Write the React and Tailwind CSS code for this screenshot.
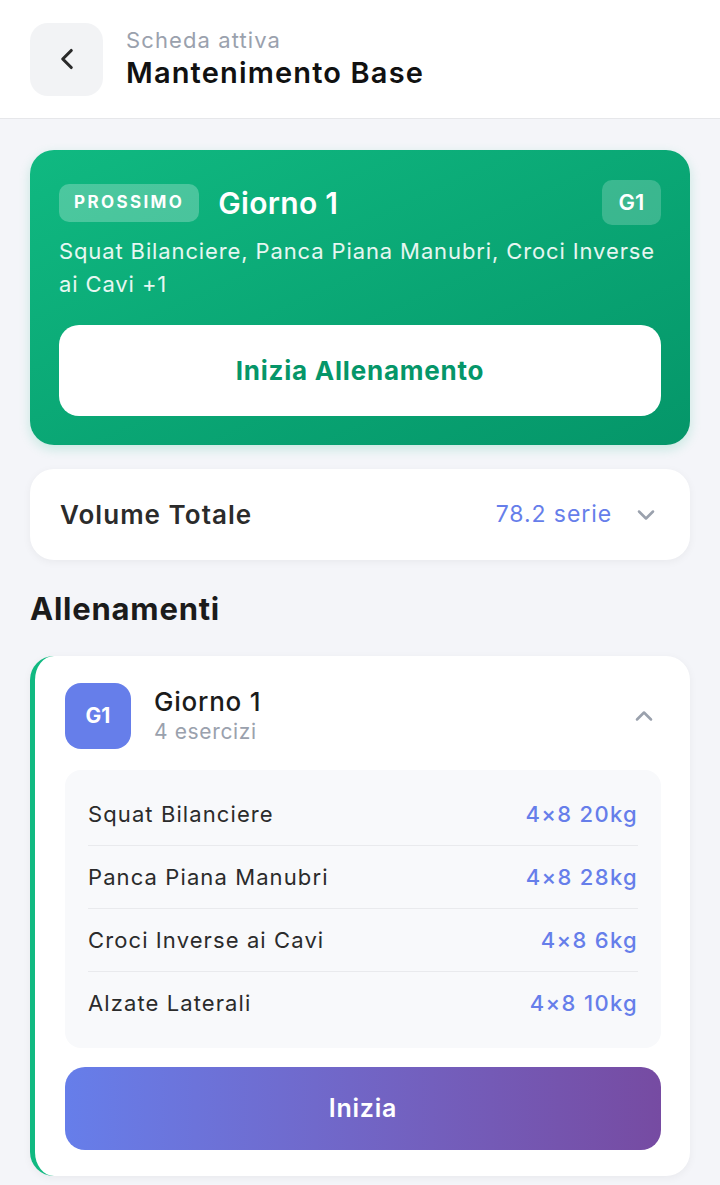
import React from 'react';

const exercises = [
  { name: 'Squat Bilanciere', detail: '4×8 20kg' },
  { name: 'Panca Piana Manubri', detail: '4×8 28kg' },
  { name: 'Croci Inverse ai Cavi', detail: '4×8 6kg' },
  { name: 'Alzate Laterali', detail: '4×8 10kg' },
];

function Chevron({ dir = 'down', className = '' }) {
  const d = dir === 'down' ? 'M6 9l6 6 6-6' : dir === 'up' ? 'M6 15l6-6 6 6' : 'M15 6l-6 6 6 6';
  return (
    <svg viewBox="0 0 24 24" fill="none" stroke="currentColor" strokeWidth="2.2" strokeLinecap="round" strokeLinejoin="round" className={className}>
      <path d={d} />
    </svg>
  );
}

export default function App() {
  return (
    <div className="min-h-[1185px] bg-[#f4f5f9] font-['Inter',sans-serif]">
      {/* Header */}
      <div className="bg-white border-b border-[#e6e7ea] h-[119px] flex items-center px-[30px] gap-[23px]">
        <button className="w-[73px] h-[73px] rounded-[18px] bg-[#f2f3f5] flex items-center justify-center text-[#2a2a2a]">
          <Chevron dir="left" className="w-[34px] h-[34px]" />
        </button>
        <div className="flex flex-col">
          <span className="text-[22px] leading-[26px] tracking-[0.05em] text-[#9aa1ad]">Scheda attiva</span>
          <span className="mt-[2px] text-[29px] leading-[36px] tracking-[0.04em] font-semibold text-[#111]">Mantenimento Base</span>
        </div>
      </div>

      <div className="px-[30px] pt-[31px] flex flex-col">
        {/* Next workout card */}
        <div className="rounded-[24px] bg-gradient-to-br from-[#10b981] to-[#059669] p-[29px] pt-[30px] shadow-[0_4px_12px_rgba(16,185,129,0.2)]">
          <div className="flex items-center">
            <span className="h-[38px] px-[15px] rounded-[10px] bg-white/25 text-white text-[17px] font-bold tracking-[0.14em] flex items-center">PROSSIMO</span>
            <span className="ml-[19px] text-white text-[30px] tracking-[0.01em] font-semibold leading-none">Giorno 1</span>
            <span className="ml-auto w-[59px] h-[45px] rounded-[10px] bg-white/20 text-white text-[22px] font-semibold flex items-center justify-center">G1</span>
          </div>
          <p className="mt-[10px] text-[22px] leading-[33px] tracking-[0.04em] text-white/90">
            Squat Bilanciere, Panca Piana Manubri, Croci Inverse ai Cavi +1
          </p>
          <button className="mt-[24px] w-full h-[91px] rounded-[20px] bg-white text-[#059669] text-[26px] tracking-[0.03em] font-bold">
            Inizia Allenamento
          </button>
        </div>

        {/* Volume */}
        <div className="mt-[24px] h-[91px] rounded-[24px] bg-white px-[30px] flex items-center shadow-[0_2px_8px_rgba(0,0,0,0.05)]">
          <span className="text-[26px] tracking-[0.04em] font-semibold text-[#2b2b2b]">Volume Totale</span>
          <span className="ml-auto text-[23px] tracking-[0.04em] text-[#667eea]">78.2 serie</span>
          <Chevron dir="down" className="ml-[20px] w-[28px] h-[28px] text-[#9aa1ad]" />
        </div>

        <h2 className="mt-[29px] text-[31px] leading-[40px] tracking-[0.025em] font-bold text-[#1b1b1b]">Allenamenti</h2>

        {/* Workout day card */}
        <div className="mt-[27px] rounded-[24px] bg-white border-l-[5px] border-[#10b981] pl-[30px] pr-[29px] pt-[27px] pb-[26px] shadow-[0_2px_8px_rgba(0,0,0,0.05)]">
          <div className="flex items-center">
            <div className="w-[66px] h-[66px] rounded-[16px] bg-[#667eea] text-white text-[21px] font-bold flex items-center justify-center">G1</div>
            <div className="ml-[23px] flex flex-col">
              <span className="text-[26px] leading-[32px] tracking-[0.03em] font-medium text-[#1b1b1b]">Giorno 1</span>
              <span className="text-[21px] leading-[28px] tracking-[0.03em] text-[#9aa1ad]">4 esercizi</span>
            </div>
            <Chevron dir="up" className="ml-auto mr-[3px] w-[28px] h-[28px] text-[#9aa1ad]" />
          </div>

          <div className="mt-[21px] rounded-[16px] bg-[#f8f9fb] px-[23px] py-[13px]">
            {exercises.map((ex, i) => (
              <div key={ex.name} className={`h-[63px] flex items-center justify-between ${i < exercises.length - 1 ? 'border-b border-[#e9eaed]' : ''}`}>
                <span className="text-[22px] tracking-[0.05em] text-[#2b2b2b]">{ex.name}</span>
                <span className="text-[22px] tracking-[0.06em] font-medium text-[#667eea]">{ex.detail}</span>
              </div>
            ))}
          </div>

          <button className="mt-[19px] w-full h-[83px] rounded-[20px] bg-gradient-to-r from-[#667eea] to-[#764ba2] text-white text-[25px] tracking-[0.03em] font-semibold">
            Inizia
          </button>
        </div>
      </div>
    </div>
  );
}
